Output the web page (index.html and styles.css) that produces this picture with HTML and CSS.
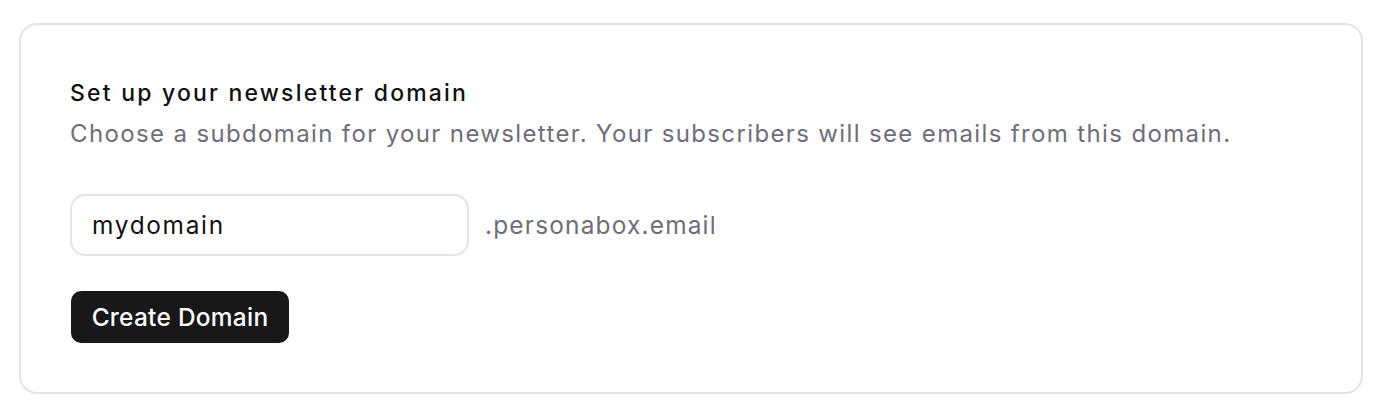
FILE: index.html
```html
<!DOCTYPE html>
<html>
<head>
<meta charset="utf-8">
<link rel="stylesheet" href="styles.css">
</head>
<body>
<div class="card">
  <h2 class="title">Set up your newsletter domain</h2>
  <p class="desc">Choose a subdomain for your newsletter. Your subscribers will see emails from this domain.</p>
  <div class="field-row">
    <input class="field" type="text" value="mydomain">
    <span class="suffix">.personabox.email</span>
  </div>
  <button class="btn">Create Domain</button>
</div>
</body>
</html>
```
FILE: styles.css
```css
* { box-sizing: border-box; }
html, body { margin: 0; background: #fff; }
body {
  padding: 23px 24px 0 19px;
  font-family: Inter, "Noto Sans", sans-serif;
}
.card {
  width: 1344px;
  height: 371px;
  border: 2px solid #e4e4e7;
  border-radius: 18px;
  padding: 52px 49px 48px 49px;
  display: flex;
  flex-direction: column;
  align-items: flex-start;
}
.title {
  margin: 0;
  font-size: 23px;
  line-height: 32px;
  font-weight: 500;
  letter-spacing: 2.2px;
  color: #111113;
}
.desc {
  margin: 8.6px 0 0;
  font-size: 24px;
  line-height: 32px;
  font-weight: 400;
  letter-spacing: 1.36px;
  color: #6e6e7a;
}
.field-row {
  margin-top: 44px;
  display: flex;
  align-items: center;
  gap: 16px;
}
.field {
  width: 399px;
  height: 62px;
  border: 2px solid #e4e4e7;
  border-radius: 15px;
  padding: 0 20px;
  font-family: inherit;
  font-size: 24.4px;
  letter-spacing: 1.7px;
  color: #111113;
  background: #fff;
  outline: none;
}
.suffix {
  font-size: 24.4px;
  letter-spacing: 1.2px;
  color: #6e6e7a;
}
.btn {
  margin-top: 35px;
  margin-left: 1px;
  width: 218px;
  height: 52px;
  padding: 0;
  border: none;
  border-radius: 10px;
  background: #18181a;
  color: #fff;
  font-family: inherit;
  font-size: 24.4px;
  font-weight: 500;
  letter-spacing: 0.3px;
  text-align: center;
}
```
